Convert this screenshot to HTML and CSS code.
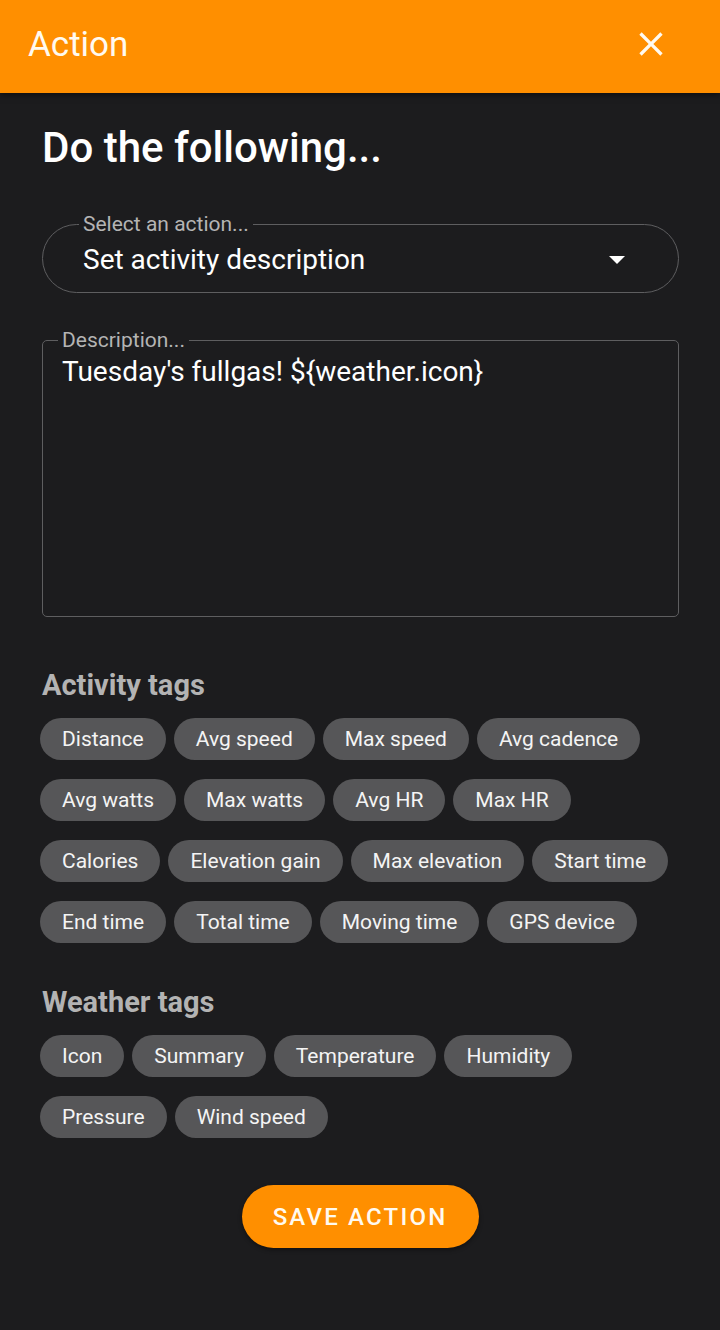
FILE: index.html
```html
<!DOCTYPE html>
<html lang="en">
<head>
<meta charset="utf-8">
<title>Action</title>
<link rel="stylesheet" href="styles.css">
</head>
<body>
<header class="topbar">
  <span class="topbar-title">Action</span>
  <button class="close-btn" aria-label="Close">
    <svg viewBox="0 0 24 24" width="40" height="40"><path d="M19 6.41 17.59 5 12 10.59 6.41 5 5 6.41 10.59 12 5 17.59 6.41 19 12 13.41 17.59 19 19 17.59 13.41 12z" fill="currentColor"/></svg>
  </button>
</header>
<main class="content">
  <h1 class="title">Do the following...</h1>

  <fieldset class="field field-select">
    <legend class="field-label">Select an action...</legend>
    <div class="select-row">
      <span class="select-value">Set activity description</span>
      <span class="caret"></span>
    </div>
  </fieldset>

  <fieldset class="field field-text">
    <legend class="field-label">Description...</legend>
    <div class="text-value">Tuesday's fullgas! ${weather.icon}</div>
  </fieldset>

  <h2 class="section-title section-activity">Activity tags</h2>
  <div class="chips">
    <span class="chip">Distance</span>
    <span class="chip">Avg speed</span>
    <span class="chip">Max speed</span>
    <span class="chip">Avg cadence</span>
    <span class="chip">Avg watts</span>
    <span class="chip">Max watts</span>
    <span class="chip">Avg HR</span>
    <span class="chip">Max HR</span>
    <span class="chip">Calories</span>
    <span class="chip">Elevation gain</span>
    <span class="chip">Max elevation</span>
    <span class="chip">Start time</span>
    <span class="chip">End time</span>
    <span class="chip">Total time</span>
    <span class="chip">Moving time</span>
    <span class="chip">GPS device</span>
  </div>

  <h2 class="section-title section-weather">Weather tags</h2>
  <div class="chips">
    <span class="chip">Icon</span>
    <span class="chip">Summary</span>
    <span class="chip">Temperature</span>
    <span class="chip">Humidity</span>
    <span class="chip">Pressure</span>
    <span class="chip">Wind speed</span>
  </div>

  <div class="actions">
    <button class="save-btn">Save action</button>
  </div>
</main>
</body>
</html>
```

FILE: styles.css
```css
* { box-sizing: border-box; }

html, body {
  margin: 0;
  padding: 0;
  background: #1c1c1e;
  font-family: Roboto, "Liberation Sans", sans-serif;
  color: #ffffff;
}

body { min-height: 1330px; }

.topbar {
  height: 93px;
  background: #ff8f00;
  display: flex;
  align-items: center;
  justify-content: space-between;
  padding: 0 49px 0 28px;
  box-shadow: 0 2px 6px rgba(0, 0, 0, 0.5);
  position: relative;
  z-index: 1;
}

.topbar-title {
  font-size: 35px;
  font-weight: 400;
  color: #fffaf0;
  margin-top: -5px;
}

.close-btn {
  background: none;
  border: 0;
  padding: 0;
  width: 40px;
  height: 40px;
  color: #fffaf0;
  display: flex;
  margin-top: -5px;
}

.content {
  padding: 0 41px 0 42px;
}

.title {
  margin: 31px 0 0;
  font-size: 42px;
  line-height: 48px;
  font-weight: 500;
  color: #ffffff;
}

.field {
  margin: 0;
  border: 1.5px solid #5e5e60;
  min-width: 0;
}

.field-label {
  font-size: 21px;
  line-height: 22px;
  color: #b4b4b4;
  padding: 0 4px;
}

.field-select {
  margin-top: 41px;
  border-radius: 36px;
  padding: 9px 53px 16px 36px;
}

.select-row {
  display: flex;
  align-items: center;
  justify-content: space-between;
}

.select-value {
  font-size: 28px;
  line-height: 32px;
  padding-left: 4px;
}

.caret {
  width: 0;
  height: 0;
  border-left: 8px solid transparent;
  border-right: 8px solid transparent;
  border-top: 8px solid #ffffff;
}

.field-text {
  margin-top: 36px;
  border-radius: 5px;
  height: 288px;
  padding: 5px 16px 0 15px;
}

.text-value {
  font-size: 28px;
  line-height: 32px;
  padding-left: 4px;
}

.section-title {
  margin: 0;
  font-size: 29px;
  line-height: 32px;
  font-weight: 700;
  color: #b3b3b3;
}

.section-activity { margin-top: 52px; }
.section-weather { margin-top: 43px; }

.chips {
  display: flex;
  flex-wrap: wrap;
  gap: 19px 8px;
  margin: 17px 0 0 -2px;
}

.chip {
  height: 42px;
  line-height: 42px;
  padding: 0 22px;
  border-radius: 21px;
  background: #565658;
  font-size: 21px;
  color: #f4f4f4;
}

.actions {
  display: flex;
  justify-content: center;
  margin-top: 47px;
  padding-right: 1px;
}

.save-btn {
  height: 63px;
  width: 237px;
  border: 0;
  border-radius: 32px;
  background: #ff8f00;
  color: #fffaf0;
  font-family: Roboto, "Liberation Sans", sans-serif;
  font-size: 24px;
  font-weight: 500;
  letter-spacing: 2.2px;
  text-transform: uppercase;
  box-shadow: 0 2px 4px rgba(0, 0, 0, 0.4);
}
```
